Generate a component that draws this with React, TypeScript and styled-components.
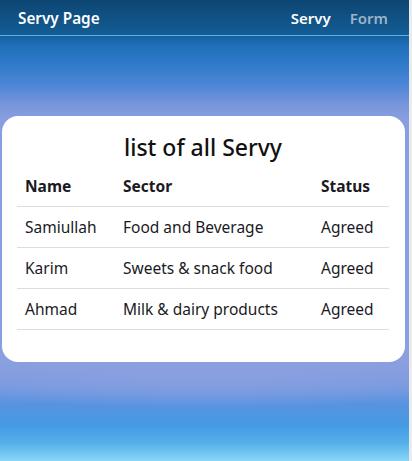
import React from "react";
import styled, { createGlobalStyle } from "styled-components";

const Global = createGlobalStyle`
  html, body { margin: 0; padding: 0; height: 100%; }
  body {
    font-family: "Noto Sans", "Lato", sans-serif;
    background: #ececec;
  }
  #root { min-height: 100%; }
`;

const Page = styled.div`
  min-height: 461px;
  width: calc(100% - 3px);
  display: flex;
  flex-direction: column;
  background:
    radial-gradient(ellipse 70% 40px at 50% 370px, rgba(140, 160, 224, 0.9), rgba(140, 160, 224, 0) 100%),
    linear-gradient(
      180deg,
      #0d4673 0px,
      #135c94 34px,
      #1f6fb8 45px,
      #2d79c8 62px,
      #4d86d6 85px,
      #7a95dc 105px,
      #889ee0 118px,
      #8a9fdf 360px,
      #7a9be0 385px,
      #5793e0 405px,
      #459ae3 425px,
      #55b0ea 443px,
      #8ad6f5 461px
    );
`;

const Header = styled.header`
  height: 35px;
  display: flex;
  align-items: center;
  justify-content: space-between;
  padding: 0 21px 0 18px;
  border-bottom: 1px solid #5bb0ec;
`;

const Brand = styled.div`
  color: #ffffff;
  font-size: 15.3px;
  font-weight: 600;
`;

const Nav = styled.nav`
  display: flex;
  gap: 19px;
`;

const NavLink = styled.span<{ $active?: boolean }>`
  font-size: 15px;
  font-weight: 600;
  color: ${(p) => (p.$active ? "#ffffff" : "#9db3c9")};
`;

const Card = styled.section`
  margin: 80px 4px 0 2px;
  background: #ffffff;
  border-radius: 16px;
  padding: 16px 16px 32px 15px;
`;

const Title = styled.h1`
  margin: 0 0 4px;
  text-align: center;
  font-size: 23px;
  line-height: 30px;
  font-weight: 500;
  color: #111;
`;

const Table = styled.table`
  width: 100%;
  border-collapse: collapse;
  color: #1a1a24;
  font-size: 15.5px;
`;

const Th = styled.th<{ $w?: number }>`
  text-align: left;
  font-weight: 700;
  height: 40px;
  padding: 0 8px;
  border-bottom: 1px solid #dcdde0;
  ${(p) => (p.$w ? `width: ${p.$w}px;` : "")}
`;

const Td = styled.td`
  height: 40px;
  padding: 0 8px;
  border-bottom: 1px solid #dcdde0;
`;

const rows = [
  { name: "Samiullah", sector: "Food and Beverage", status: "Agreed" },
  { name: "Karim", sector: "Sweets & snack food", status: "Agreed" },
  { name: "Ahmad", sector: "Milk & dairy products", status: "Agreed" },
];

export default function App() {
  return (
    <>
      <Global />
      <Page>
        <Header>
          <Brand>Servy Page</Brand>
          <Nav>
            <NavLink $active>Servy</NavLink>
            <NavLink>Form</NavLink>
          </Nav>
        </Header>
        <Card>
          <Title>list of all Servy</Title>
          <Table>
            <thead>
              <tr>
                <Th $w={82}>Name</Th>
                <Th>Sector</Th>
                <Th $w={60}>Status</Th>
              </tr>
            </thead>
            <tbody>
              {rows.map((r) => (
                <tr key={r.name}>
                  <Td>{r.name}</Td>
                  <Td>{r.sector}</Td>
                  <Td>{r.status}</Td>
                </tr>
              ))}
            </tbody>
          </Table>
        </Card>
      </Page>
    </>
  );
}
